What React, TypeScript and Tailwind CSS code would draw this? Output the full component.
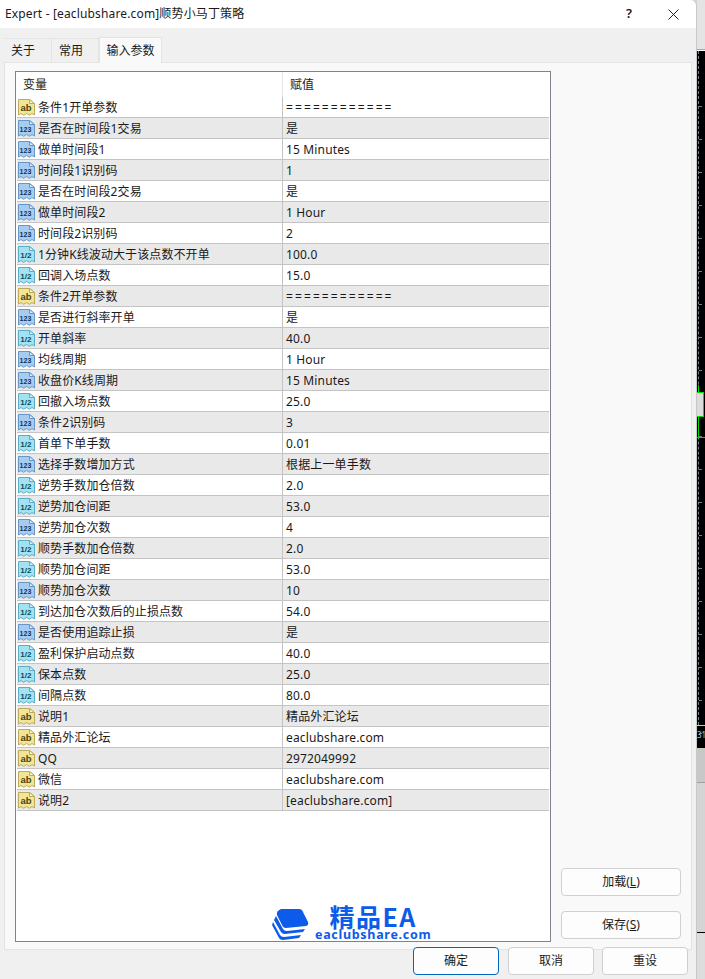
type Kind = 'ab' | 'int' | 'dbl'

const rows: [Kind, string, string][] = [
  ['ab', '条件1开单参数', '============'],
  ['int', '是否在时间段1交易', '是'],
  ['int', '做单时间段1', '15 Minutes'],
  ['int', '时间段1识别码', '1'],
  ['int', '是否在时间段2交易', '是'],
  ['int', '做单时间段2', '1 Hour'],
  ['int', '时间段2识别码', '2'],
  ['dbl', '1分钟K线波动大于该点数不开单', '100.0'],
  ['dbl', '回调入场点数', '15.0'],
  ['ab', '条件2开单参数', '============'],
  ['int', '是否进行斜率开单', '是'],
  ['dbl', '开单斜率', '40.0'],
  ['int', '均线周期', '1 Hour'],
  ['int', '收盘价K线周期', '15 Minutes'],
  ['dbl', '回撤入场点数', '25.0'],
  ['int', '条件2识别码', '3'],
  ['dbl', '首单下单手数', '0.01'],
  ['int', '选择手数增加方式', '根据上一单手数'],
  ['dbl', '逆势手数加仓倍数', '2.0'],
  ['dbl', '逆势加仓间距', '53.0'],
  ['int', '逆势加仓次数', '4'],
  ['dbl', '顺势手数加仓倍数', '2.0'],
  ['dbl', '顺势加仓间距', '53.0'],
  ['int', '顺势加仓次数', '10'],
  ['dbl', '到达加仓次数后的止损点数', '54.0'],
  ['int', '是否使用追踪止损', '是'],
  ['dbl', '盈利保护启动点数', '40.0'],
  ['dbl', '保本点数', '25.0'],
  ['dbl', '间隔点数', '80.0'],
  ['ab', '说明1', '精品外汇论坛'],
  ['ab', '精品外汇论坛', 'eaclubshare.com'],
  ['ab', 'QQ', '2972049992'],
  ['ab', '微信', 'eaclubshare.com'],
  ['ab', '说明2', '[eaclubshare.com]'],
]

const iconStyles = {
  ab: { fill: '#f3e596', stroke: '#bcab58', fold: '#fbf6d0', label: 'ab', ink: '#4a4310', size: 9.5, x: 2.4 },
  int: { fill: '#a6cdf0', stroke: '#6597ca', fold: '#dcebf9', label: '123', ink: '#12345c', size: 7, x: 1.6 },
  dbl: { fill: '#a4e2f2', stroke: '#58adc9', fold: '#daf3f9', label: '1/2', ink: '#0f4a5a', size: 8, x: 2.2 },
}

function TypeIcon({ kind }: { kind: Kind }) {
  const s = iconStyles[kind]
  return (
    <svg width="17" height="17" viewBox="0 0 17 17" className="shrink-0">
      <path
        d="M0.5 0.5 H11.5 L16.5 4.5 V16 L14 14.5 L11.5 16.3 L8.5 14.5 L5.5 16.3 L3 14.5 L0.5 16 Z"
        fill={s.fill}
        stroke={s.stroke}
      />
      <path d="M11.5 0.5 V4.5 H16.5 Z" fill={s.fold} stroke={s.stroke} />
      <text
        x={s.x}
        y="11.5"
        fontSize={s.size}
        fontWeight="700"
        fill={s.ink}
        fontFamily="'Liberation Sans', sans-serif"
      >
        {s.label}
      </text>
    </svg>
  )
}

function Logo() {
  return (
    <div className="absolute left-[256px] top-[832px] flex items-start gap-[5px]">
      <svg width="38" height="34" viewBox="0 0 38 34" className="mt-[3px]">
        <path d="M9 2 H27 Q30 2 31 5 L36 15 Q37 18 34 19 L14 21 Q11 21 10 18 L5 8 Q4 4 9 2 Z" fill="#0d5bea" />
        <path d="M4 9 L11 22 Q12 24 15 24 L33 22 L31 25 L13 27 Q10 27 9 25 L2 13 Z" fill="#0d5bea" />
        <path d="M1 15 L8 28 Q9 30 12 30 L29 28 L27 31 L11 33 Q8 33 7 31 L0 18 Z" fill="#0d5bea" />
      </svg>
      <div className="flex flex-col items-center text-[#0d5bea]">
        <div className="text-[25px] leading-[24px] font-bold [font-family:'Noto_Sans_CJK_SC','Noto_Sans',sans-serif] tracking-[1.5px]">
          精品EA
        </div>
        <div className="text-[12.5px] leading-[14px] font-bold tracking-[0.7px] [font-family:'Noto_Sans',sans-serif]">
          eaclubshare.com
        </div>
      </div>
    </div>
  )
}

function DialogButton({ label, primary }: { label: string; primary?: boolean }) {
  return (
    <button
      className={`h-[28px] w-[86px] rounded-[4px] border bg-[#fdfdfd] text-[12px] text-[#1a1a1a] ${
        primary ? 'mr-px border-[#0067c0]' : 'border-[#d0d0d0]'
      }`}
    >
      {label}
    </button>
  )
}

function SideButton({ children }: { children: React.ReactNode }) {
  return (
    <button className="h-[28px] w-[120px] rounded-[4px] border border-[#d0d0d0] bg-[#fdfdfd] text-[12px] text-[#1a1a1a]">
      {children}
    </button>
  )
}

const ticks = Array.from({ length: 21 }, (_, i) => i)

function ChartStrip() {
  return (
    <div className="flex w-[8px] shrink-0 flex-col bg-[#d4d4d4]">
      <div className="h-[50px] border-b border-[#a8a8a8] bg-[#e4e4e4]" />
      <div className="relative h-[698px] overflow-hidden border-t border-white bg-black">
        <div className="absolute left-[1px] top-0 h-[674px] border-l border-dashed border-[#6f7f8f]" />
        {ticks.map((t) => (
          <div key={t} className="absolute left-[2px] h-px w-[3px] bg-[#6f7f8f]" style={{ top: 55 + t * 33 }} />
        ))}
        <div className="absolute left-[1px] top-[334px] h-[52px] w-px bg-[#00e000]" />
        <div className="absolute left-0 top-[341px] h-[25px] w-[7px] border border-l-0 border-[#00e000] bg-[#dcdcdc]" />
        <div className="absolute left-0 top-[386px] h-px w-full bg-[#6f7f8f]" />
        <div className="absolute left-0 top-[674px] h-px w-full bg-[#c8c8c8]" />
        <div className="absolute left-0 top-[680px] text-[8px] leading-none text-[#8fd0f0]">31</div>
      </div>
      <div className="h-[35px] border-b border-[#a0a0a0] bg-[#c8c8c8]" />
      <div className="h-[150px] border-b border-black bg-[#d4d4d4]" />
      <div className="flex-1 bg-[#dcdcdc]" />
    </div>
  )
}

export default function App() {
  return (
    <div className="flex h-[979px] w-[705px] overflow-hidden bg-[#d4d4d4] text-[12px] text-[#1a1a1a] [font-family:'Noto_Sans','Noto_Sans_CJK_SC',sans-serif]">
      <div className="flex w-[697px] shrink-0 flex-col rounded-tr-[6px] border-r border-[#c8c8c8] bg-[#f0f0f0]">
        <div className="flex h-[28px] items-center justify-between rounded-tr-[6px] bg-white pl-[5px] pr-[17px]">
          <span className="text-[12px] tracking-[0.15px]">Expert - [eaclubshare.com]顺势小马丁策略</span>
          <div className="flex items-center gap-[36px]">
            <span className="text-[13px] font-semibold">?</span>
            <svg width="11" height="11" viewBox="0 0 11 11">
              <path d="M0.5 0.5 L10.5 10.5 M10.5 0.5 L0.5 10.5" stroke="#222" fill="none" />
            </svg>
          </div>
        </div>

        <div className="flex h-[34px] items-end pl-[5px]">
          <div className="flex h-[24px] w-[47px] items-center border-r border-t border-[#e4e4e4] bg-[#f0f0f0] pl-[6px]">
            关于
          </div>
          <div className="flex h-[24px] w-[47px] items-center border-r border-t border-[#e4e4e4] bg-[#f0f0f0] pl-[7px]">
            常用
          </div>
          <div className="relative top-px flex h-[26px] w-[63px] items-center justify-center border border-b-0 border-[#e4e4e4] bg-[#f9f9f9]">
            输入参数
          </div>
        </div>

        <div className="ml-[4px] flex h-[888px] w-[688px] gap-[10px] border border-[#e4e4e4] bg-[#f9f9f9] pl-[10px] pt-[8px]">
          <div className="relative h-[871px] w-[536px] shrink-0 border border-[#82828c] bg-white">
            <div className="flex h-[25px] items-center">
              <div className="w-[267px] border-r border-[#e4e4e4] pl-[7px] leading-[25px]">变量</div>
              <div className="pl-[7px]">赋值</div>
            </div>
            <div className="ml-px mr-px">
              {rows.map(([kind, name, value], i) => (
                <div
                  key={i}
                  className={`flex h-[21px] items-center border-b border-[#c4c4c4] tracking-[0.1px] ${
                    i % 2 === 1 ? 'bg-[#e9e9e9]' : 'bg-white'
                  }`}
                >
                  <div className="flex h-full w-[266px] items-center gap-[3px] border-r border-[#c4c4c4] pl-px">
                    <TypeIcon kind={kind} />
                    <span className="whitespace-nowrap pt-px">{name}</span>
                  </div>
                  <div
                    className={`whitespace-nowrap pl-[3px] pt-px ${
                      value.startsWith('=') ? 'tracking-[2.1px]' : 'tracking-[0.15px]'
                    }`}
                  >
                    {value}
                  </div>
                </div>
              ))}
            </div>
            <Logo />
          </div>
          <div className="flex w-[120px] flex-col gap-[15px] pt-[797px]">
            <SideButton>
              加载(<span className="underline">L</span>)
            </SideButton>
            <SideButton>
              保存(<span className="underline">S</span>)
            </SideButton>
          </div>
        </div>

        <div className="-mt-[3px] flex justify-end gap-[8px] pr-[8px]">
          <DialogButton label="确定" primary />
          <DialogButton label="取消" />
          <DialogButton label="重设" />
        </div>
      </div>
      <ChartStrip />
    </div>
  )
}
